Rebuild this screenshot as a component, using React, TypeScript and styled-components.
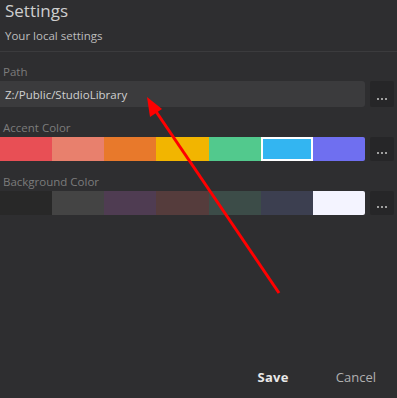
import React from "react";
import styled, { createGlobalStyle } from "styled-components";

const Global = createGlobalStyle`
  html, body { margin: 0; padding: 0; background: #2e2e30; }
  body { font-family: "Open Sans", "DejaVu Sans", sans-serif; }
`;

const Page = styled.div`
  position: relative;
  width: 397px;
  height: 398px;
  background: #2e2e30;
  display: flex;
  flex-direction: column;
  overflow: hidden;
`;

const Header = styled.div`
  display: flex;
  flex-direction: column;
  padding: 0 5px;
  height: 52px;
  border-bottom: 1px solid #3b3b3d;
  box-sizing: border-box;
`;

const Title = styled.div`
  font-size: 17px;
  line-height: 22px;
  color: #cfcfcf;
`;

const Subtitle = styled.div`
  font-size: 11.5px;
  line-height: 16px;
  color: #bdbdbd;
  margin-top: 6px;
`;

const Body = styled.div`
  display: flex;
  flex-direction: column;
  padding: 12px 3px 0 0;
`;

const Field = styled.div`
  display: flex;
  flex-direction: column;
  margin-bottom: 13px;
`;

const Label = styled.div`
  font-size: 11.5px;
  line-height: 16px;
  color: #7c7c7c;
  padding-left: 3px;
  margin-bottom: 1px;
`;

const Row = styled.div<{ $h: number }>`
  display: flex;
  align-items: stretch;
  gap: 5px;
  height: ${(p) => p.$h}px;
`;

const Input = styled.div`
  flex: 1;
  background: #3b3b3d;
  border-radius: 0 3px 3px 0;
  color: #d0d0d0;
  font-size: 11.5px;
  display: flex;
  align-items: center;
  padding-left: 5px;
`;

const Swatches = styled.div`
  flex: 1;
  display: grid;
  grid-template-columns: repeat(7, 1fr);
  border-radius: 0 2px 2px 0;
  overflow: hidden;
`;

const Swatch = styled.div<{ $color: string; $selected?: boolean }>`
  background: ${(p) => p.$color};
  box-sizing: border-box;
  border: ${(p) => (p.$selected ? "2px solid #ffffff" : "none")};
`;

const MoreButton = styled.div`
  width: 24px;
  background: #262628;
  border-radius: 2px;
  display: flex;
  align-items: flex-end;
  justify-content: center;
  gap: 2px;
  padding-bottom: 7px;
  box-sizing: border-box;
`;

const Dot = styled.span`
  width: 2px;
  height: 2px;
  background: #a0a0a0;
`;

const Footer = styled.div`
  margin-top: auto;
  display: flex;
  justify-content: flex-end;
  align-items: center;
  height: 42px;
  padding-right: 21px;
  gap: 47px;
`;

const Button = styled.div<{ $primary?: boolean }>`
  font-size: 13px;
  font-weight: ${(p) => (p.$primary ? 700 : 400)};
  color: ${(p) => (p.$primary ? "#e8e8e8" : "#b0b0b0")};
  letter-spacing: ${(p) => (p.$primary ? "0.3px" : "0")};
`;

const Overlay = styled.svg`
  position: absolute;
  left: 0;
  top: 0;
  pointer-events: none;
`;

const accent = ["#e84f55", "#e8806d", "#e8792b", "#f2b500", "#52c98d", "#33b5f1", "#6f6ff0"];
const bgs = ["#282828", "#444444", "#4f3c52", "#553c3c", "#3c4c48", "#3c3f50", "#f4f4ff"];

function More() {
  return (
    <MoreButton>
      <Dot />
      <Dot />
      <Dot />
    </MoreButton>
  );
}

export default function App() {
  return (
    <Page>
      <Global />
      <Header>
        <Title>Settings</Title>
        <Subtitle>Your local settings</Subtitle>
      </Header>
      <Body>
        <Field>
          <Label>Path</Label>
          <Row $h={26}>
            <Input>Z:/Public/StudioLibrary</Input>
            <More />
          </Row>
        </Field>
        <Field>
          <Label>Accent Color</Label>
          <Row $h={24}>
            <Swatches>
              {accent.map((c, i) => (
                <Swatch key={c} $color={c} $selected={i === 5} />
              ))}
            </Swatches>
            <More />
          </Row>
        </Field>
        <Field>
          <Label>Background Color</Label>
          <Row $h={24}>
            <Swatches>
              {bgs.map((c) => (
                <Swatch key={c} $color={c} />
              ))}
            </Swatches>
            <More />
          </Row>
        </Field>
      </Body>
      <Footer>
        <Button $primary>Save</Button>
        <Button>Cancel</Button>
      </Footer>
      <Overlay width="397" height="398" viewBox="0 0 397 398">
        <line x1="279" y1="293" x2="155" y2="110" stroke="#ff0000" strokeWidth="3" />
        <polygon points="147,97 150,117 162,109" fill="#ff0000" />
      </Overlay>
    </Page>
  );
}
